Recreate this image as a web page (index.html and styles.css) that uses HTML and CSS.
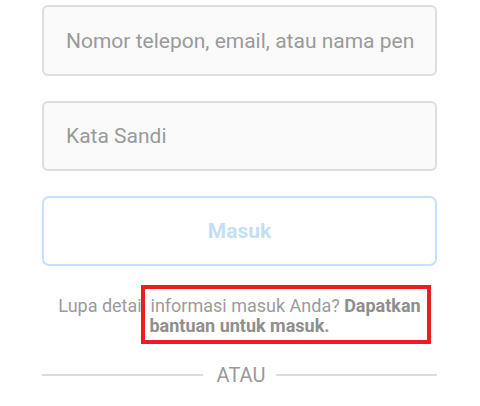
FILE: index.html
```html
<!DOCTYPE html>
<html lang="id">
<head>
<meta charset="utf-8">
<link rel="stylesheet" href="styles.css">
</head>
<body>
<div class="form">
  <div class="field"><span class="ph">Nomor telepon, email, atau nama pengguna</span></div>
  <div class="field"><span class="ph">Kata Sandi</span></div>
  <div class="btn">Masuk</div>
  <div class="help">
    <p>Lupa detail informasi masuk Anda? <b>Dapatkan bantuan untuk masuk.</b></p>
    <div class="mark"></div>
  </div>
  <div class="sep"><span class="line"></span><span class="or">ATAU</span><span class="line"></span></div>
</div>
</body>
</html>
```
FILE: styles.css
```css
html, body { margin: 0; padding: 0; background: #fff; }
body { font-family: Roboto, "Noto Sans", sans-serif; width: 480px; height: 406px; overflow: hidden; }
.form { margin: 5px 43px 0 42px; display: flex; flex-direction: column; }
.field {
  box-sizing: border-box; height: 71px; border: 2px solid #dedede; border-radius: 6px;
  background: #fafafa; color: #9a9a9a; font-size: 21px; padding: 0 20px 0 22px;
  display: flex; align-items: center; margin-bottom: 25px;
}
.field + .field { height: 70px; }
.ph { flex: 1; min-width: 0; white-space: nowrap; overflow: hidden; }
.btn {
  box-sizing: border-box; height: 70px; border: 2px solid #c6e2fa; border-radius: 7px;
  color: #c3dff8; font-weight: bold; font-size: 21px; display: flex; align-items: center; justify-content: center;
}
.help { position: relative; margin-top: 30px; }
.help p { margin: 0; text-align: center; font-size: 18px; line-height: 20px; color: #9b9b9b; }
.help b { color: #8e8e8e; }
.mark { position: absolute; left: 99px; top: -11px; width: 282px; height: 51px; border: 4px solid #ec1c24; }
.sep { display: flex; align-items: center; margin-top: 27px; }
.line { flex: 1; height: 2px; background: #dcdcdc; }
.or { color: #999; font-size: 20px; padding: 0 11px 0 14px; }
```
